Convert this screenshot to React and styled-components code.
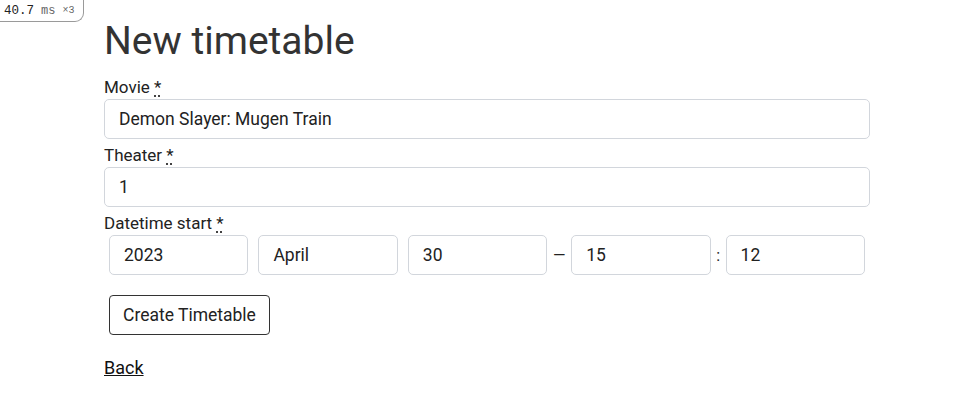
import React from 'react'
import styled, { createGlobalStyle } from 'styled-components'

const Global = createGlobalStyle`
  body { margin:0; background:#fff; font-family: Roboto, "Liberation Sans", sans-serif; color:#222; }
`

const Badge = styled.div`
  position:absolute; top:0; left:0;
  height:21px; padding:0 9px 0 4px;
  display:flex; align-items:center; gap:7px;
  border:1px solid #9a9a9a; border-top:none; border-left:none;
  border-bottom-right-radius:9px;
  font-family:"Liberation Mono", "DejaVu Sans Mono", monospace; font-size:12.5px; color:#222;
  background:#fff;
`
const Unit = styled.span`color:#666; font-size:12px;`
const Count = styled.span`color:#666; font-size:10px;`

const Page = styled.main`
  width:766px; padding:17px 0 0 104px;
`
const Title = styled.h1`
  margin:0 0 10px 0; font-size:39px; font-weight:400; color:#333; line-height:48px;
`
const Field = styled.div`margin-bottom:4px;`
const Label = styled.label`
  display:block; font-size:17px; line-height:24px; color:#222;
`
const Req = styled.abbr`
  text-decoration:underline dotted; text-underline-offset:3px; cursor:help;
`
const Input = styled.input`
  display:block; box-sizing:border-box; width:100%; height:40px;
  padding:0 14px; border:1px solid #d2d6dc; border-radius:5px;
  font:17.5px Roboto, "Liberation Sans", sans-serif; color:#222; background:#fff;
`
const DateRow = styled.div`
  display:flex; align-items:center;
`
const Select = styled.div`
  box-sizing:border-box; width:139.5px; height:40px; margin:0 5px;
  display:flex; align-items:center; padding:0 14px;
  border:1px solid #d2d6dc; border-radius:5px;
  font-size:17.5px; color:#222;
`
const Sep = styled.span`font-size:16px; color:#222; width:${p => p.$w}; text-align:center;`
const Button = styled.button`
  margin:16px 0 0 5px; height:40px; padding:0 13px;
  border:1px solid #333; border-radius:4px; background:#fff;
  font:17.5px Roboto, "Liberation Sans", sans-serif; color:#222;
`
const Back = styled.a`
  display:inline-block; margin-top:22px; font-size:18px; color:#111; text-decoration:underline;
`

export default function App(){
  return (
    <>
      <Global />
      <Badge>40.7<Unit>ms</Unit><Count>×3</Count></Badge>
      <Page>
        <Title>New timetable</Title>
        <Field>
          <Label>Movie <Req title="required">*</Req></Label>
          <Input defaultValue="Demon Slayer: Mugen Train" />
        </Field>
        <Field>
          <Label>Theater <Req title="required">*</Req></Label>
          <Input defaultValue="1" />
        </Field>
        <Field>
          <Label>Datetime start <Req title="required">*</Req></Label>
          <DateRow>
            <Select>2023</Select>
            <Select>April</Select>
            <Select>30</Select>
            <Sep $w="14px">—</Sep>
            <Select>15</Select>
            <Sep $w="5px">:</Sep>
            <Select>12</Select>
          </DateRow>
        </Field>
        <Button>Create Timetable</Button>
        <div><Back href="#">Back</Back></div>
      </Page>
    </>
  )
}
